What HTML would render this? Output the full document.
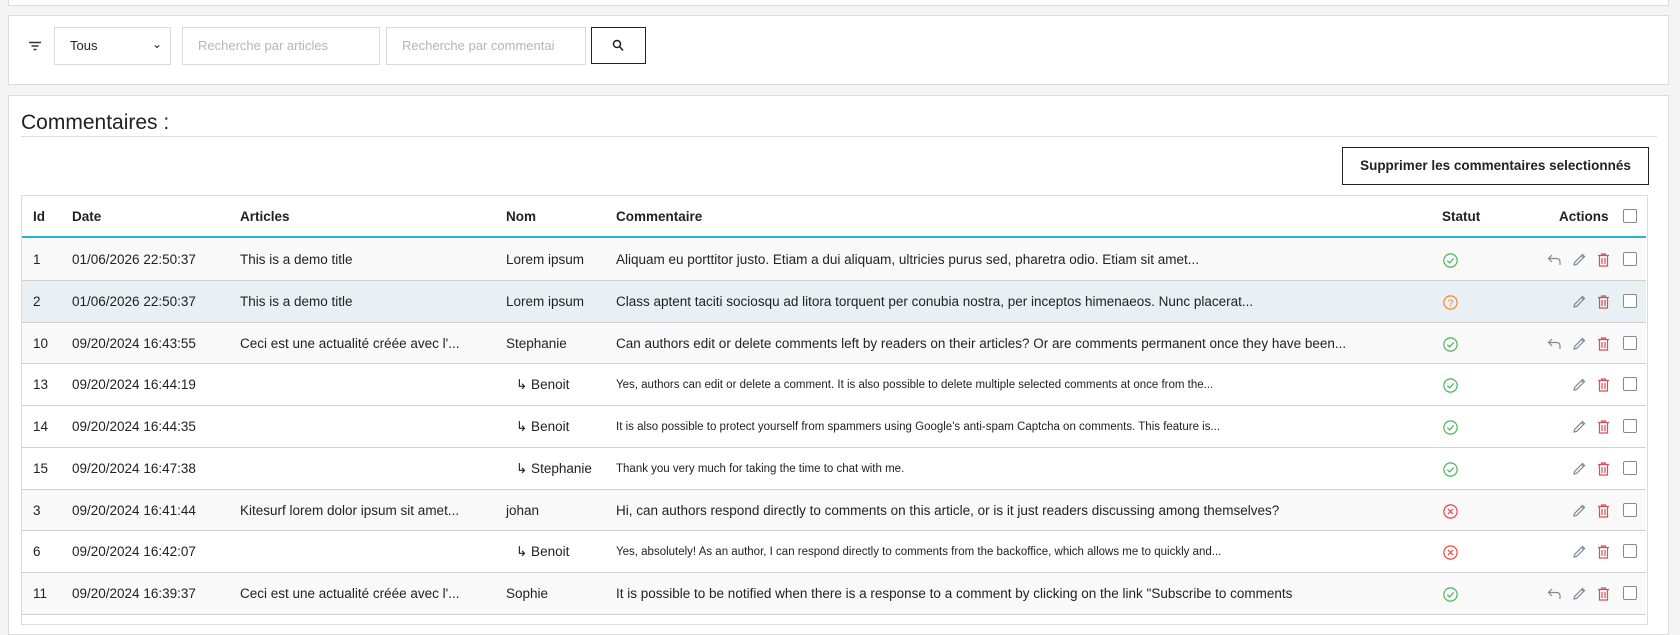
<!DOCTYPE html>
<html><head><meta charset="utf-8"><style>
*{box-sizing:border-box;margin:0;padding:0}
body{width:1680px;height:616px;overflow:hidden;background:#f4f4f4;font-family:"Liberation Sans",sans-serif;color:#222;position:relative}
.panel{position:absolute;background:#fff;border:1px solid #dcdcdc}
.abs{position:absolute}
.inp{position:absolute;border:1px solid #dadada;background:#fff;font-size:13px;color:#b5b5b5;padding-left:15px;line-height:36px;white-space:nowrap;overflow:hidden}
.row{position:absolute;left:22px;width:1624px;border-bottom:1px solid #d0d0d0;font-size:13.5px}
.row span{position:absolute;top:13px;white-space:nowrap}
.sm{font-size:11.5px!important;top:15px!important}
.cb{position:absolute;width:14px;height:14px;border:1px solid #888;border-radius:2px;background:#fff}
svg{position:absolute}
</style></head><body>
<div class="panel" style="left:8px;top:-2px;width:1661px;height:8px"></div>
<div class="panel" style="left:8px;top:15px;width:1661px;height:70px">
 <svg style="left:20px;top:25px" width="12" height="10" viewBox="0 0 12 10"><path d="M0 1.5H12M2.5 5H9.5M4.5 8.5H7.5" stroke="#333" stroke-width="1.4"/></svg>
 <div class="inp" style="left:45px;top:11px;width:117px;height:38px;color:#222;">Tous<span style="position:absolute;right:8px;top:-2px;font-size:12px">&#8964;</span></div>
 <div class="inp" style="left:173px;top:11px;width:198px;height:38px">Recherche par articles</div>
 <div class="inp" style="left:377px;top:11px;width:200px;height:38px">Recherche par commentai</div>
 <div class="abs" style="left:582px;top:11px;width:55px;height:37px;border:1px solid #222"><svg style="left:20px;top:11px" width="12" height="13" viewBox="0 0 12 13"><circle cx="5" cy="5" r="3.5" stroke="#222" stroke-width="1.5" fill="none"/><path d="M7.5 7.5L11 11.5" stroke="#222" stroke-width="1.6"/></svg></div>
</div>
<div class="panel" style="left:8px;top:95px;width:1661px;height:540px">
 <div class="abs" style="left:12px;top:15px;font-size:21px;color:#222">Commentaires :</div>
 <div class="abs" style="left:12px;top:40px;width:1636px;height:1px;background:#ddd"></div>
 <div class="abs" style="left:1333px;top:51px;width:307px;height:38px;border:1px solid #222;font-size:13.5px;font-weight:bold;text-align:center;line-height:36px">Supprimer les commentaires selectionnés</div>
</div>
<div class="abs" style="left:21px;top:195px;width:1627px;height:430px;border:1px solid #dcdcdc;background:#fff"></div>
<div class="abs" style="left:22px;top:196px;width:1624px;height:42px;border-bottom:2px solid #25b3d1;font-size:13.5px;font-weight:bold">
 <span class="abs" style="left:11px;top:13px">Id</span><span class="abs" style="left:50px;top:13px">Date</span><span class="abs" style="left:218px;top:13px">Articles</span><span class="abs" style="left:484px;top:13px">Nom</span><span class="abs" style="left:594px;top:13px">Commentaire</span><span class="abs" style="left:1420px;top:13px">Statut</span><span class="abs" style="left:1537px;top:13px">Actions</span>
 <div class="cb" style="left:1601px;top:13px"></div>
</div>
<div id="rows"></div>
<script>
var R=[["1","01/06/2026 22:50:37","This is a demo title","Lorem ipsum","Aliquam eu porttitor justo. Etiam a dui aliquam, ultricies purus sed, pharetra odio. Etiam sit amet...",0,"ok",1,"#f9f9f9"],
["2","01/06/2026 22:50:37","This is a demo title","Lorem ipsum","Class aptent taciti sociosqu ad litora torquent per conubia nostra, per inceptos himenaeos. Nunc placerat...",0,"q",0,"#e9f0f3"],
["10","09/20/2024 16:43:55","Ceci est une actualité créée avec l'...","Stephanie","Can authors edit or delete comments left by readers on their articles? Or are comments permanent once they have been...",0,"ok",1,"#f9f9f9"],
["13","09/20/2024 16:44:19","","↳ Benoit","Yes, authors can edit or delete a comment. It is also possible to delete multiple selected comments at once from the...",1,"ok",0,"#fff"],
["14","09/20/2024 16:44:35","","↳ Benoit","It is also possible to protect yourself from spammers using Google's anti-spam Captcha on comments. This feature is...",1,"ok",0,"#fff"],
["15","09/20/2024 16:47:38","","↳ Stephanie","Thank you very much for taking the time to chat with me.",1,"ok",0,"#fff"],
["3","09/20/2024 16:41:44","Kitesurf lorem dolor ipsum sit amet...","johan","Hi, can authors respond directly to comments on this article, or is it just readers discussing among themselves?",0,"x",0,"#f9f9f9"],
["6","09/20/2024 16:42:07","","↳ Benoit","Yes, absolutely! As an author, I can respond directly to comments from the backoffice, which allows me to quickly and...",1,"x",0,"#fff"],
["11","09/20/2024 16:39:37","Ceci est une actualité créée avec l'...","Sophie","It is possible to be notified when there is a response to a comment by clicking on the link \"Subscribe to comments",0,"ok",1,"#f9f9f9"]];
var h="";
R.forEach(function(r,i){var t=Math.round(239+i*41.75),b=Math.round(239+(i+1)*41.75);
var st=r[6]=="ok"?'<svg style="left:1421px;top:14px" width="15" height="15" viewBox="0 0 14 14"><circle cx="7" cy="7" r="6.2" fill="none" stroke="#4cb35a" stroke-width="1.1"/><path d="M4 7.2L6.2 9.2L10 5" fill="none" stroke="#4cb35a" stroke-width="1.1"/></svg>':r[6]=="q"?'<svg style="left:1421px;top:14px" width="15" height="15" viewBox="0 0 14 14"><circle cx="7" cy="7" r="6.2" fill="none" stroke="#f0852b" stroke-width="1.1"/><text x="7" y="10.5" font-size="9.5" text-anchor="middle" fill="#f0852b" font-family="Liberation Sans">?</text></svg>':'<svg style="left:1421px;top:14px" width="15" height="15" viewBox="0 0 14 14"><circle cx="7" cy="7" r="6.2" fill="none" stroke="#ec4343" stroke-width="1.1"/><path d="M4.6 4.6L9.4 9.4M9.4 4.6L4.6 9.4" stroke="#ec4343" stroke-width="1.1"/></svg>';
h+='<div class="row" style="top:'+t+'px;height:'+(b-t)+'px;background:'+r[8]+'"><span style="left:11px">'+r[0]+'</span><span style="left:50px">'+r[1]+'</span><span style="left:218px">'+r[2]+'</span><span style="left:'+(r[5]?494:484)+'px">'+r[3]+'</span><span style="left:594px" class="'+(r[5]?"sm":"")+'">'+r[4]+'</span>'+st+
(r[7]?'<svg style="left:1525px;top:15px" width="14" height="12" viewBox="0 0 14 12"><path d="M5 1L1.5 4.5L5 8M1.5 4.5H9.5Q13 4.5 13 8V11" fill="none" stroke="#7a8a96" stroke-width="1.2"/></svg>':'')+
'<svg style="left:1550px;top:14px" width="14" height="14" viewBox="0 0 14 14"><path d="M2 12L2.6 9.4L10.5 1.5L12.5 3.5L4.6 11.4Z M9.5 2.5L11.5 4.5" fill="none" stroke="#7a8a96" stroke-width="1.2"/></svg>'+
'<svg style="left:1575px;top:14px" width="13" height="14" viewBox="0 0 13 14"><path d="M1 2.5H12M4.5 2.5V1H8.5V2.5M2.5 2.5V13H10.5V2.5M5 5V11M8 5V11" fill="none" stroke="#d4505a" stroke-width="1.2"/></svg>'+
'<div class="cb" style="left:1601px;top:13px"></div></div>';});
document.getElementById("rows").innerHTML=h;
</script>
</body></html>
